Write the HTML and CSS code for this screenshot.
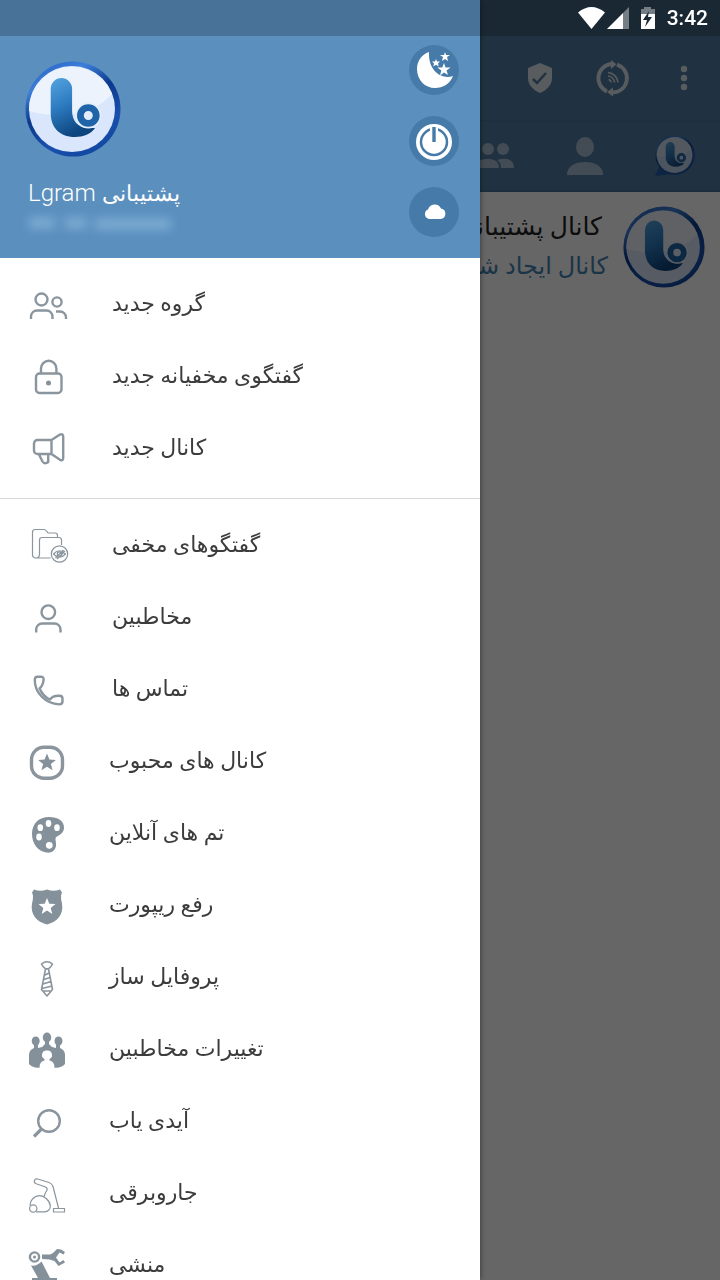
FILE: index.html
```
<!DOCTYPE html>
<html lang="fa">
<head>
    <meta charset="UTF-8">
    <meta name="viewport" content="width=device-width, initial-scale=1.0">
    <title>Lgram</title>
    <link rel="stylesheet" href="styles.css">
</head>
<body>
    <!-- shared logo -->
    <svg class="defs" aria-hidden="true">
        <defs>
            <linearGradient id="ring" x1="0.2" y1="0" x2="0.7" y2="1">
                <stop offset="0" stop-color="#2a66c8"/>
                <stop offset=".2" stop-color="#3c7fd8"/>
                <stop offset=".45" stop-color="#0b3a8c"/>
                <stop offset=".75" stop-color="#1a4fae"/>
                <stop offset="1" stop-color="#1048a0"/>
            </linearGradient>
            <linearGradient id="letter" x1="0" y1="0" x2="0.4" y2="1">
                <stop offset="0" stop-color="#55a4e0"/>
                <stop offset=".5" stop-color="#2c7abf"/>
                <stop offset="1" stop-color="#0c447e"/>
            </linearGradient>
            <symbol id="logo" viewBox="0 0 96 96">
                <circle cx="48" cy="48" r="47.500" fill="url(#ring)"/>
                <circle cx="47" cy="48" r="43" fill="#d9e6fb"/>
                <path d="M4 50a43 43 0 0 1 83-17C70 52 40 60 4 50z" fill="#edf3fd"/>
                <path d="M25.700 28a10.700 11 0 0 1 21.400 0v22c0 10 6 16 14 17h9c-4 6-12 9-20 9C34 76 25.700 66 25.700 52z" fill="url(#letter)"/>
                <circle cx="63.300" cy="54.500" r="13" fill="#e4edfc"/>
                <circle cx="63.300" cy="54.500" r="7.900" fill="none" stroke="#1f64a8" stroke-width="6.800"/>
            </symbol>
        </defs>
    </svg>

    <main class="page">
        <header class="toolbar">
            <button class="toolbtn" aria-label="proxy">
                <svg width="36" height="36" viewBox="0 0 36 36"><path d="M18 3l12 5v10c0 7-5 12-12 15C11 30 6 25 6 18V8z" fill="#fff"/><path d="M11 19l4 4 9-10" fill="none" stroke="#527da3" stroke-width="2.500"/></svg>
            </button>
            <button class="toolbtn" aria-label="refresh">
                <svg width="36" height="36" viewBox="0 0 36 36" fill="none" stroke="#fff"><path d="M13 31.400A14.300 14.300 0 0 1 18 4M23 4.600A14.300 14.300 0 0 1 18 32.500" stroke-width="3.800"/><path d="M17 0l5.500 4.200L17 9zM19 27.500l-6 4.500 6 4.500z" fill="#fff" stroke="none"/><path d="M14 12.500a11 11 0 0 1 10 10M14 16a7 7 0 0 1 6.500 6.500M14.500 19.500a3 3 0 0 1 2.500 3" stroke-width="1.600"/></svg>
            </button>
            <button class="toolbtn" aria-label="more">
                <svg width="36" height="36" viewBox="0 0 36 36" fill="#fff"><circle cx="18" cy="9" r="3.200"/><circle cx="18" cy="18" r="3.200"/><circle cx="18" cy="27" r="3.200"/></svg>
            </button>
        </header>
        <nav class="tabs">
            <a href="#groups" class="tab" aria-label="groups">
                <svg width="40" height="40" viewBox="0 0 40 40" fill="#fff"><circle cx="12" cy="13" r="6"/><circle cx="27" cy="13" r="6"/><path d="M0 32c0-7 5-9 12-9 6 0 11 2 11 9zM25 32c0-4-1-6-4-8 9-3 17-1 17 8z"/></svg>
            </a>
            <a href="#users" class="tab" aria-label="users">
                <svg width="40" height="40" viewBox="0 0 40 40" fill="#fff"><ellipse cx="20" cy="11" rx="9" ry="10"/><path d="M2 39c0-9 8-13 18-13s18 4 18 13z"/></svg>
            </a>
            <a href="#all" class="tab current" aria-label="all">
                <svg width="42" height="42" viewBox="0 0 42 42"><path d="M1 41l7-16 12 14z" fill="#1d56b0"/><use href="#logo" x="1" y="0" width="40" height="40"/></svg>
            </a>
        </nav>
        <a href="#channel" class="chat" dir="rtl">
            <svg class="chatpic" width="82" height="82"><use href="#logo" width="82" height="82"/></svg>
            <div class="chattext">
                <div class="chatname">کانال پشتیبانی</div>
                <div class="chatmsg">کانال ایجاد شد</div>
            </div>
        </a>
    </main>

    <div class="scrim"></div>

    <aside class="drawer">
        <header class="profile">
            <div class="account">
                <svg width="96" height="96"><use href="#logo" width="96" height="96"/></svg>
                <div class="username">Lgram <span class="fa">پشتیبانی</span></div>
                <svg class="phone" width="150" height="20" viewBox="0 0 150 20" aria-hidden="true"><path d="M4 9h26M40 9h22M70 10h76" stroke="#a5d2ee" stroke-width="12" fill="none"/></svg>
            </div>
            <div class="roundbtns">
                <button class="roundbtn" aria-label="night mode">
                    <svg width="50" height="50" viewBox="0 0 50 50" fill="#fff"><path d="M20 7C13 9 8 16 8 24c0 11 8 19 18 19 8 0 15-4 18-12C33 35 19 26 20 7z"/><path d="M36 7l1 3h4l-3 2 1 4-3-2-3 2 1-4-3-2h4zM27 14l1 2.500h3l-2 2 .7 3-2.700-1.700-2.700 1.700.7-3-2-2h3zM35 18l1.500 4.500h5l-4 3 1.500 4.500-4-2.500-4 3 1.300-5-4-3h5z"/></svg>
                </button>
                <button class="roundbtn" aria-label="power">
                    <svg width="50" height="50" viewBox="0 0 50 50"><circle cx="25" cy="26" r="18" fill="#fff"/><circle cx="25" cy="26" r="13" fill="none" stroke="#467ba9" stroke-width="2.500"/><path d="M25 10v16" stroke="#fff" stroke-width="8"/><path d="M25 11v15" stroke="#467ba9" stroke-width="3.400"/></svg>
                </button>
                <button class="roundbtn" aria-label="cloud">
                    <svg width="50" height="50" viewBox="0 0 50 50" fill="#fff"><path d="M20 32a5 5 0 0 1-1-9.500 7 7 0 0 1 13-1 5.300 5.300 0 0 1-.5 10.500z"/></svg>
                </button>
            </div>
        </header>

        <nav class="menu">
            <a href="#newgroup" class="item">
                <svg class="icon" viewBox="0 0 48 48"><circle cx="17.500" cy="18.500" r="6"/><circle cx="33" cy="21" r="4.600"/><path d="M7 38v-2.500a6 6 0 0 1 6-6h9.500a6 6 0 0 1 6 6V38M32 30.500h4a6 6 0 0 1 6 6V38"/></svg>
                <span>گروه جدید</span>
            </a>
            <a href="#secret" class="item">
                <svg class="icon" viewBox="0 0 48 48"><rect x="12" y="20.500" width="25.500" height="19.500" rx="3.500"/><path d="M17 20v-4.500a7.700 7.700 0 0 1 15.400 0V20"/><circle cx="24.500" cy="30" r="2.500" class="fill"/></svg>
                <span>گفتگوی مخفیانه جدید</span>
            </a>
            <a href="#newchannel" class="item">
                <svg class="icon" viewBox="0 0 48 48"><path d="M27.500 15H13.500a3.500 3.500 0 0 0-3.500 3.500v7a3.500 3.500 0 0 0 3.500 3.500h14zM27.500 15l8.500-5.400q3.200-1.300 3.200 1.900v21.500q0 3.200-3.200 1.800L27.500 29M15 29.500l3.500 7q1.500 2.500 4 1.500t1.700-3.500V29.500"/></svg>
                <span>کانال جدید</span>
            </a>
            <hr>
            <a href="#hidden" class="item">
                <svg class="icon thin" viewBox="0 0 48 48"><path d="M26.500 36H11.500a3 3 0 0 1-3-3V10a2.500 2.500 0 0 1 2.500-2.500h9q1.500 0 2.500 1.500l1.500 2H31a2.500 2.500 0 0 1 2.500 2.500v2M12 36q3.500 0 3.500-4V18a2.500 2.500 0 0 1 2.500-2.500h17a2.500 2.500 0 0 1 2.500 2.500v5"/><circle cx="35.500" cy="32" r="8.200"/><path d="M29.500 32q6-6.500 12 0-6 6.500-12 0zM31.500 36l8-8M33 37l8-8"/><circle cx="35.500" cy="32" r="2.200"/></svg>
                <span>گفتگوهای مخفی</span>
            </a>
            <a href="#contacts" class="item">
                <svg class="icon" viewBox="0 0 48 48"><circle cx="24.300" cy="18.200" r="6.800"/><path d="M12.200 38.500v-3a6 6 0 0 1 6-6h12.300a6 6 0 0 1 6 6v3"/></svg>
                <span>مخاطبین</span>
            </a>
            <a href="#calls" class="item">
                <svg class="icon" viewBox="0 0 48 48"><path d="M13.500 10.800h3.500q2.800 0 2.600 2.700c-.2 4-1.200 6.500-4 9Q19 30.500 26 33.500c2-3 5-4 9.500-3.800q3 .1 3 2.800v3q0 2.900-3.300 2.900C21 37.500 10.500 26.500 10.800 13.500q.1-2.700 2.700-2.700z"/></svg>
                <span>تماس ها</span>
            </a>
            <a href="#favorites" class="item extra">
                <svg class="icon" viewBox="0 0 48 48"><rect x="7.500" y="9.200" width="31" height="31" rx="12.500" stroke-width="3.400"/><path class="fill" d="M23 15.500l2.400 6.100 6.500.3-5 4.100 1.700 6.300-5.600-3.500-5.600 3.500 1.700-6.300-5-4.100 6.500-.3z"/></svg>
                <span>کانال های محبوب</span>
            </a>
            <a href="#themes" class="item extra">
                <svg class="icon" viewBox="0 0 48 48"><path class="fill" d="M25 7c9 0 15 4 15 10.500 0 5-3.500 7-7 9-3 2-.5 4.500-1 9-.7 5.500-5 7.700-9.500 7C14 41.500 8 33.500 8 24 8 13.500 15 7 25 7z"/><g class="hole"><ellipse cx="24.500" cy="13.500" rx="2.800" ry="3.400"/><ellipse cx="16.300" cy="17.700" rx="2.800" ry="3.400"/><ellipse cx="33" cy="17.700" rx="2.800" ry="3.400"/><ellipse cx="15" cy="27" rx="2.800" ry="3.400"/><circle cx="25.300" cy="35.300" r="3.400"/></g></svg>
                <span>تم های آنلاین</span>
            </a>
            <a href="#report" class="item extra">
                <svg class="icon" viewBox="0 0 48 48"><path class="fill" d="M10 7.500q6.500 2.500 13 0 6.500 2.500 13 0l2 3q-2 4 0 11c2 11-5 18.500-15 21-10-2.500-17-10-15-21q2-7 0-11z"/><path class="hole" d="M23 16l2.300 5.700 6.200.3-4.800 3.900 1.600 6-5.300-3.400-5.300 3.400 1.600-6-4.800-3.900 6.200-.3z"/></svg>
                <span>رفع ریپورت</span>
            </a>
            <a href="#profile" class="item extra">
                <svg class="icon mid" viewBox="0 0 48 48"><path d="M17.500 10q5.500-4.500 11 0-1.500 3.500-4 4.700h-3q-2.500-1.200-4-4.700zM21.500 15h3l4 20.500L23 42l-5.500-6.500zM21 21l4-2M20 25.500l6-2M19 30l8-2.500M18 34.500l10-2.500M18.500 37l8 0"/></svg>
                <span>پروفایل ساز</span>
            </a>
            <a href="#changes" class="item extra">
                <svg class="icon" viewBox="0 0 48 48"><g class="fill"><ellipse cx="11.700" cy="15" rx="4" ry="4.500"/><ellipse cx="23" cy="11.500" rx="4.200" ry="5"/><ellipse cx="34.500" cy="15" rx="4" ry="4.500"/><path d="M10 18h4v4l4-1 3-3v-4h4v4l3 3 4 1v-4h4v4q5 2 5 7v9q-4 4-9 3.700H14Q9 42 5 38v-9q0-5 5-7z"/></g><path class="hole" d="M23 24.500a4.500 4.500 0 0 1 2.500 8.500v1.500q5 .5 5 7.500h-15q0-7 5-7.500V33a4.500 4.500 0 0 1 2.500-8.500z"/></svg>
                <span>تغییرات مخاطبین</span>
            </a>
            <a href="#search" class="item extra">
                <svg class="icon" viewBox="0 0 48 48"><circle cx="25" cy="23" r="10.800"/><path d="M17.500 31l-7.500 7.500" stroke-width="3.200"/></svg>
                <span>آیدی یاب</span>
            </a>
            <a href="#clean" class="item extra">
                <svg class="icon thin" viewBox="0 0 48 48"><circle cx="9.200" cy="38.500" r="3.700"/><path d="M6 35.500C6 30 10.500 25.700 15.500 25.700 20 25.700 26 30.500 26.300 36q0 5-5.300 5.800H12M20 26.500q1-3.500 3-6.500.7-2-1.500-3l-10-3.500q-2-1.500-.8-3.500 1-1.600 3-1L25 12.500q3 1 4 4L34.500 38M20 26.500l-3-.7M29.500 38.500h11v3.500h-11z"/></svg>
                <span>جاروبرقی</span>
            </a>
            <a href="#secretary" class="item extra">
                <svg class="icon" viewBox="0 0 48 48"><circle cx="10.500" cy="15" r="4.600"/><circle cx="10.500" cy="15" r="1.500" class="fill"/><path class="fill" d="M18 12.500h8l3-1.500 4-4 4 .5 4 2.500-1.500 2.500-4-2-3.500 5 3.500 5 4-2.500 1.500 2.500-6.500 3.500-4-5-5-1.500-7.500-.5zM7 23.500q6 1 10.500-4L26 36h7v3H8v-3h6z"/></svg>
                <span>منشی</span>
            </a>
        </nav>
    </aside>

    <div class="statusbar">
        <svg width="78" height="24" viewBox="0 0 78 24" fill="#fff"><path d="M0 6.500q13.500-11 27 0L13.500 23z"/><path d="M29 23L45 7v16z"/><path d="M45 7l6-6v22h-6z" opacity=".4"/><path d="M63 3h3V1h7v2h4v5H63z" opacity=".4"/><path d="M63 8h14v15H63z"/><path d="M71 5l-6 9h4l-2 7 7-10h-4z" fill="#1a2834"/></svg>
        <span class="time">3:42</span>
    </div>
</body>
</html>
```
FILE: styles.css
```
* {
    box-sizing: border-box;
}
body {
    margin: 0;
    height: 100vh;
    overflow: hidden;
    background-color: white;
    font-family: Roboto, "DejaVu Sans", sans-serif;
}
a {
    color: inherit;
    text-decoration: none;
}
button {
    border: none;
    padding: 0;
    background: none;
    cursor: pointer;
}
svg {
    display: block;
}
.defs {
    position: absolute;
    width: 0;
    height: 0;
}

/* page behind the drawer */
.toolbar {
    display: flex;
    justify-content: flex-end;
    align-items: center;
    gap: 36px;
    height: 121px;
    padding: 36px 18px 0 0;
    background-color: #527da3;
    border-bottom: 1px solid #4c7599;
}
.toolbtn svg {
    opacity: .8;
}
.tabs {
    display: flex;
    justify-content: flex-end;
    align-items: center;
    gap: 49px;
    height: 71px;
    padding-right: 24px;
    background-color: #527da3;
    border-bottom: 2px solid #47749b;
}
.tab {
    opacity: .5;
}
.current {
    opacity: .8;
}
.chat {
    display: flex;
    gap: 15px;
    padding: 14px 15px;
    white-space: nowrap;
}
.chatname {
    padding-right: 6px;
    font-size: 25px;
    line-height: 42px;
    color: #222;
}
.chatmsg {
    font-size: 24px;
    line-height: 36px;
    color: #4585b5;
}
.scrim {
    position: fixed;
    inset: 0;
    background-color: rgba(0, 0, 0, .6);
}

/* drawer */
.drawer {
    position: fixed;
    top: 0;
    bottom: 0;
    left: 0;
    width: calc(100% * 2 / 3);
    overflow: hidden;
    background-color: white;
    box-shadow: 0 0 6px rgba(0, 0, 0, .5);
}
.profile {
    display: flex;
    justify-content: space-between;
    height: 258px;
    padding: 45px 21px 0 25px;
    background-color: #5b8fbe;
}
.account {
    padding-top: 16px;
}
.username {
    margin-top: 16px;
    padding-left: 3px;
    font-size: 24px;
    font-weight: 300;
    line-height: 40px;
    color: white;
}
.fa {
    font-size: 22px;
}
.phone {
    filter: blur(5px);
    opacity: .4;
}
.roundbtns {
    display: flex;
    flex-direction: column;
    gap: 21px;
}
.roundbtn {
    width: 50px;
    height: 50px;
    border-radius: 50%;
    background-color: #467ba9;
}
.menu {
    padding: 8px 0;
}
.menu hr {
    margin: 16px 0 8px;
    border: none;
    border-top: 1px solid #d9d9d9;
}
.item {
    display: flex;
    align-items: center;
    gap: 40px;
    height: 72px;
    padding-left: 24px;
    font-size: 22px;
    line-height: 32px;
    color: #3c3c3c;
}
.item span {
    padding-top: 4px;
}
.extra {
    gap: 37px;
}
.icon {
    width: 48px;
    height: 48px;
    margin-top: 6px;
    fill: none;
    stroke: #8a959e;
    stroke-width: 2.4;
    stroke-linejoin: round;
}
.thin {
    stroke-width: 1.2;
}
.mid {
    stroke-width: 1.6;
}
.icon .fill {
    fill: #84919b;
    stroke: none;
}
.icon .hole {
    fill: white;
    stroke: none;
}

/* system bar */
.statusbar {
    position: fixed;
    top: 0;
    left: 0;
    right: 0;
    display: flex;
    justify-content: flex-end;
    align-items: center;
    gap: 11px;
    height: 36px;
    padding-right: 12px;
    background-color: rgba(0, 0, 0, .2);
    color: white;
}
.time {
    font-size: 21px;
    font-weight: 500;
}
```
